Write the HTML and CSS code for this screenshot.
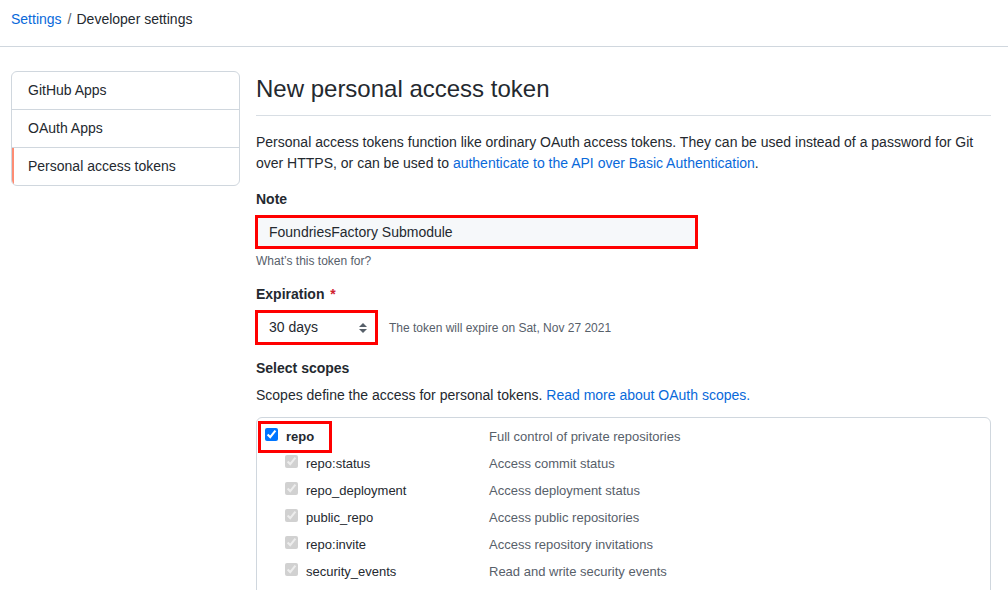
FILE: index.html
```html
<!DOCTYPE html>
<html lang="en">
<head>
<meta charset="utf-8">
<title>New personal access token</title>
<link rel="stylesheet" href="styles.css">
</head>
<body>
<header class="crumbs">
  <a class="link" href="#">Settings</a><span class="sep">/</span><span>Developer settings</span>
</header>
<div class="layout">
  <nav class="side">
    <a class="side-item" href="#">GitHub Apps</a>
    <a class="side-item" href="#">OAuth Apps</a>
    <a class="side-item selected" href="#">Personal access tokens</a>
  </nav>
  <main class="main">
    <h2 class="title">New personal access token</h2>
    <p class="intro">Personal access tokens function like ordinary OAuth access tokens. They can be used instead of a password for Git over HTTPS, or can be used to <a class="link" href="#">authenticate to the API over Basic Authentication</a>.</p>

    <div class="group">
      <div class="label">Note</div>
      <div class="mark mark-input"><div class="input">FoundriesFactory Submodule</div></div>
      <div class="note">What’s this token for?</div>
    </div>

    <div class="group group-exp">
      <div class="label">Expiration <span class="req">*</span></div>
      <div class="select-row">
        <div class="mark mark-select">
          <div class="select"><span>30 days</span>
            <svg class="updown" width="8" height="10" viewBox="0 0 8 10"><path d="M4 0L0 4h8z M4 10L0 6h8z" fill="#57606a"/></svg>
          </div>
        </div>
        <span class="note exp-note">The token will expire on Sat, Nov 27 2021</span>
      </div>
    </div>

    <div class="group group-scopes">
      <div class="label">Select scopes</div>
      <p class="scopes-intro">Scopes define the access for personal tokens. <a class="link" href="#">Read more about OAuth scopes.</a></p>
    </div>

    <div class="scopes">
      <div class="row top">
        <div class="name"><input type="checkbox" checked><span class="bold">repo</span></div>
        <div class="desc">Full control of private repositories</div>
        <div class="mark-repo"></div>
      </div>
      <div class="row sub">
        <div class="name"><input type="checkbox" checked disabled><span>repo:status</span></div>
        <div class="desc">Access commit status</div>
      </div>
      <div class="row sub">
        <div class="name"><input type="checkbox" checked disabled><span>repo_deployment</span></div>
        <div class="desc">Access deployment status</div>
      </div>
      <div class="row sub">
        <div class="name"><input type="checkbox" checked disabled><span>public_repo</span></div>
        <div class="desc">Access public repositories</div>
      </div>
      <div class="row sub">
        <div class="name"><input type="checkbox" checked disabled><span>repo:invite</span></div>
        <div class="desc">Access repository invitations</div>
      </div>
      <div class="row sub">
        <div class="name"><input type="checkbox" checked disabled><span>security_events</span></div>
        <div class="desc">Read and write security events</div>
      </div>
      <div class="row sub">
        <div class="name"></div>
        <div class="desc"></div>
      </div>
    </div>
  </main>
</div>
</body>
</html>
```

FILE: styles.css
```css
html, body {
  margin: 0;
  background: #ffffff;
}
body {
  font-family: "Liberation Sans", Arial, sans-serif;
  font-size: 14px;
  line-height: 21px;
  color: #24292f;
}
.link {
  color: #0969da;
  text-decoration: none;
}
.crumbs {
  padding: 9px 11px 16px;
  border-bottom: 1px solid #d0d7de;
  height: 21px;
}
.sep {
  color: #57606a;
  padding: 0 5px 0 6px;
}
.layout {
  display: flex;
  gap: 16px;
  padding: 24px 17px 0 11px;
}
.side {
  box-sizing: border-box;
  width: 229px;
  flex: none;
  align-self: flex-start;
  border: 1px solid #d0d7de;
  border-radius: 6px;
  display: flex;
  flex-direction: column;
  overflow: hidden;
}
.side-item {
  display: block;
  padding: 8px 16px;
  line-height: 21px;
  color: #24292f;
  text-decoration: none;
  border-top: 1px solid #d0d7de;
}
.side-item:first-child {
  border-top: 0;
}
.side-item.selected {
  box-shadow: inset 2px 0 0 #fd8c73;
}
.main {
  flex: 1;
  min-width: 0;
}
.title {
  margin: 0;
  font-size: 24px;
  font-weight: 400;
  line-height: 36px;
  padding-bottom: 8px;
  border-bottom: 1px solid #d8dee4;
}
.intro {
  margin: 16px 0 0;
}
.group {
  margin-top: 15px;
}
.group-exp {
  margin-top: 14px;
}
.group-scopes {
  margin-top: 13px;
}
.label {
  font-weight: 700;
}
.req {
  color: #cf222e;
  margin-left: 2px;
}
.mark {
  border: 3px solid #ff0000;
  display: inline-block;
  vertical-align: top;
  margin-left: -1px;
}
.mark-input {
  margin-top: 5px;
  display: block;
  width: 437px;
}
.input {
  height: 28px;
  line-height: 28px;
  padding: 0 11px;
  background: #f6f8fa;
  font-size: 14px;
}
.note {
  display: block;
  margin-top: 3px;
  font-size: 12px;
  line-height: 18px;
  color: #57606a;
}
.select-row {
  margin-top: 5px;
  display: flex;
  align-items: center;
}
.mark-select {
  width: 117px;
}
.select {
  height: 29px;
  display: flex;
  align-items: center;
  justify-content: space-between;
  padding: 0 8px 0 11px;
  background: #ffffff;
}
.updown {
  display: block;
}
.exp-note {
  margin: 0 0 0 11px;
}
.scopes-intro {
  margin: 6px 0 0;
}
.scopes {
  margin-top: 11px;
  border: 1px solid #d0d7de;
  border-radius: 6px;
  padding-top: 5px;
}
.row {
  position: relative;
  display: grid;
  grid-template-columns: 232px 1fr;
  height: 27px;
  align-items: center;
  font-size: 13px;
}
.name {
  display: flex;
  align-items: center;
  gap: 8px;
  padding-left: 8px;
}
.row.sub .name {
  padding-left: 28px;
}
.name input {
  margin: 0;
  width: 13px;
  height: 13px;
  position: relative;
  top: -2px;
}
.bold {
  font-weight: 700;
}
.desc {
  color: #57606a;
}
.mark-repo {
  position: absolute;
  left: 1px;
  top: -2px;
  width: 74px;
  height: 32px;
  box-sizing: border-box;
  border: 3px solid #ff0000;
}
```
